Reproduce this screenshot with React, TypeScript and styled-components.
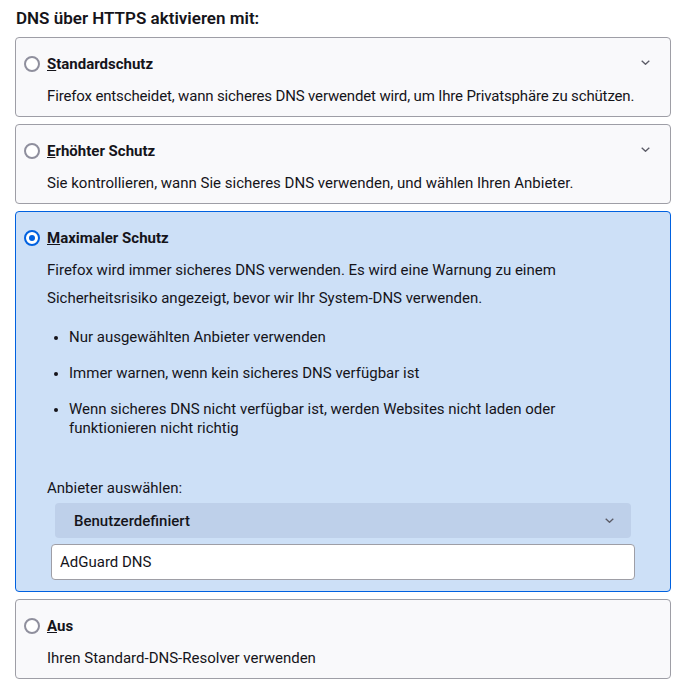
import styled, { createGlobalStyle } from "styled-components";

const GlobalStyle = createGlobalStyle`
  body {
    margin: 0;
    background: #ffffff;
    font-family: "Segoe UI", Roboto, "Noto Sans", sans-serif;
    color: #15141a;
  }
`;

const Page = styled.div`
  padding: 7px 15px 0 15px;
`;

const Heading = styled.h2`
  margin: 0 0 8px 1px;
  font-size: 17px;
  font-weight: 600;
  line-height: 22px;
`;

const Options = styled.div`
  display: flex;
  flex-direction: column;
  gap: 7px;
`;

const Card = styled.div<{ $selected?: boolean }>`
  position: relative;
  border: 1px solid ${(p) => (p.$selected ? "#0061e0" : "#9e9ea6")};
  border-radius: 4px;
  background: ${(p) => (p.$selected ? "#cde0f7" : "#f9f9fb")};
  padding: 14px 27px ${(p) => (p.$selected ? "11px" : "6px")} 8px;
`;

const TitleRow = styled.label`
  display: flex;
  align-items: center;
  gap: 7px;
  height: 24px;
  font-size: 15px;
  font-weight: 700;
  line-height: 24px;
`;

const Radio = styled.span<{ $checked?: boolean }>`
  box-sizing: border-box;
  width: 16px;
  height: 16px;
  border-radius: 50%;
  flex: none;
  border: 2px solid ${(p) => (p.$checked ? "#0061e0" : "#8f8f9d")};
  background: #ffffff;
  display: flex;
  align-items: center;
  justify-content: center;

  &::after {
    content: "";
    width: 6px;
    height: 6px;
    border-radius: 50%;
    background: ${(p) => (p.$checked ? "#0061e0" : "transparent")};
  }
`;

const Body = styled.div`
  padding-left: 23px;
`;

const Description = styled.p<{ $compact?: boolean }>`
  margin: 6px 0 0;
  font-size: 15px;
  line-height: 28px;
  white-space: ${(p) => (p.$compact ? "nowrap" : "normal")};
  letter-spacing: ${(p) => (p.$compact ? "-0.15px" : "normal")};
`;

const Bullets = styled.ul`
  margin: 16px 0 0;
  padding-left: 22px;
  display: flex;
  flex-direction: column;
  gap: 17px;
  font-size: 15px;
  line-height: 19px;

  li::marker {
    font-size: 13px;
  }
`;

const Label = styled.div`
  margin-top: 41px;
  font-size: 15px;
  line-height: 19px;
`;

const Select = styled.div`
  margin: 5px 12px 0 8px;
  height: 35px;
  border-radius: 4px;
  background: #bed0ea;
  display: flex;
  align-items: center;
  justify-content: space-between;
  padding: 0 17px 0 19px;
  font-size: 15px;
  font-weight: 500;
`;

const TextInput = styled.input`
  display: block;
  box-sizing: border-box;
  margin: 6px 8px 0 4px;
  width: calc(100% - 12px);
  height: 36px;
  border: 1px solid #9e9ea6;
  border-radius: 4px;
  background: #ffffff;
  padding: 0 8px;
  font: inherit;
  font-size: 15px;
  color: #15141a;
`;

const Expander = styled.span`
  position: absolute;
  top: 18px;
  right: 19px;
  width: 12px;
  height: 12px;
  display: flex;
  align-items: center;
  justify-content: center;
`;

const Chevron = () => (
  <svg width="9" height="5" viewBox="0 0 9 5" fill="none">
    <path d="M0.7 0.7l3.8 3.6 3.8-3.6" stroke="#5b5b66" strokeWidth="1.3" />
  </svg>
);

const AccessKey = ({ text }: { text: string }) => (
  <span>
    <u>{text[0]}</u>
    {text.slice(1)}
  </span>
);

const App = () => {
  return (
    <Page>
      <GlobalStyle />
      <Heading>DNS über HTTPS aktivieren mit:</Heading>
      <Options>
        <Card>
          <TitleRow>
            <Radio />
            <AccessKey text="Standardschutz" />
          </TitleRow>
          <Body>
            <Description $compact>
              Firefox entscheidet, wann sicheres DNS verwendet wird, um Ihre
              Privatsphäre zu schützen.
            </Description>
          </Body>
          <Expander>
            <Chevron />
          </Expander>
        </Card>

        <Card>
          <TitleRow>
            <Radio />
            <AccessKey text="Erhöhter Schutz" />
          </TitleRow>
          <Body>
            <Description>
              Sie kontrollieren, wann Sie sicheres DNS verwenden, und wählen
              Ihren Anbieter.
            </Description>
          </Body>
          <Expander>
            <Chevron />
          </Expander>
        </Card>

        <Card $selected>
          <TitleRow>
            <Radio $checked />
            <AccessKey text="Maximaler Schutz" />
          </TitleRow>
          <Body>
            <Description>
              Firefox wird immer sicheres DNS verwenden. Es wird eine Warnung zu
              einem
              <br />
              Sicherheitsrisiko angezeigt, bevor wir Ihr System-DNS verwenden.
            </Description>
            <Bullets>
              <li>Nur ausgewählten Anbieter verwenden</li>
              <li>Immer warnen, wenn kein sicheres DNS verfügbar ist</li>
              <li>
                Wenn sicheres DNS nicht verfügbar ist, werden Websites nicht
                laden oder
                <br />
                funktionieren nicht richtig
              </li>
            </Bullets>
            <Label>Anbieter auswählen:</Label>
            <Select>
              <span>Benutzerdefiniert</span>
              <Chevron />
            </Select>
            <TextInput defaultValue="AdGuard DNS" />
          </Body>
        </Card>

        <Card>
          <TitleRow>
            <Radio />
            <AccessKey text="Aus" />
          </TitleRow>
          <Body>
            <Description>Ihren Standard-DNS-Resolver verwenden</Description>
          </Body>
        </Card>
      </Options>
    </Page>
  );
};

export default App;
